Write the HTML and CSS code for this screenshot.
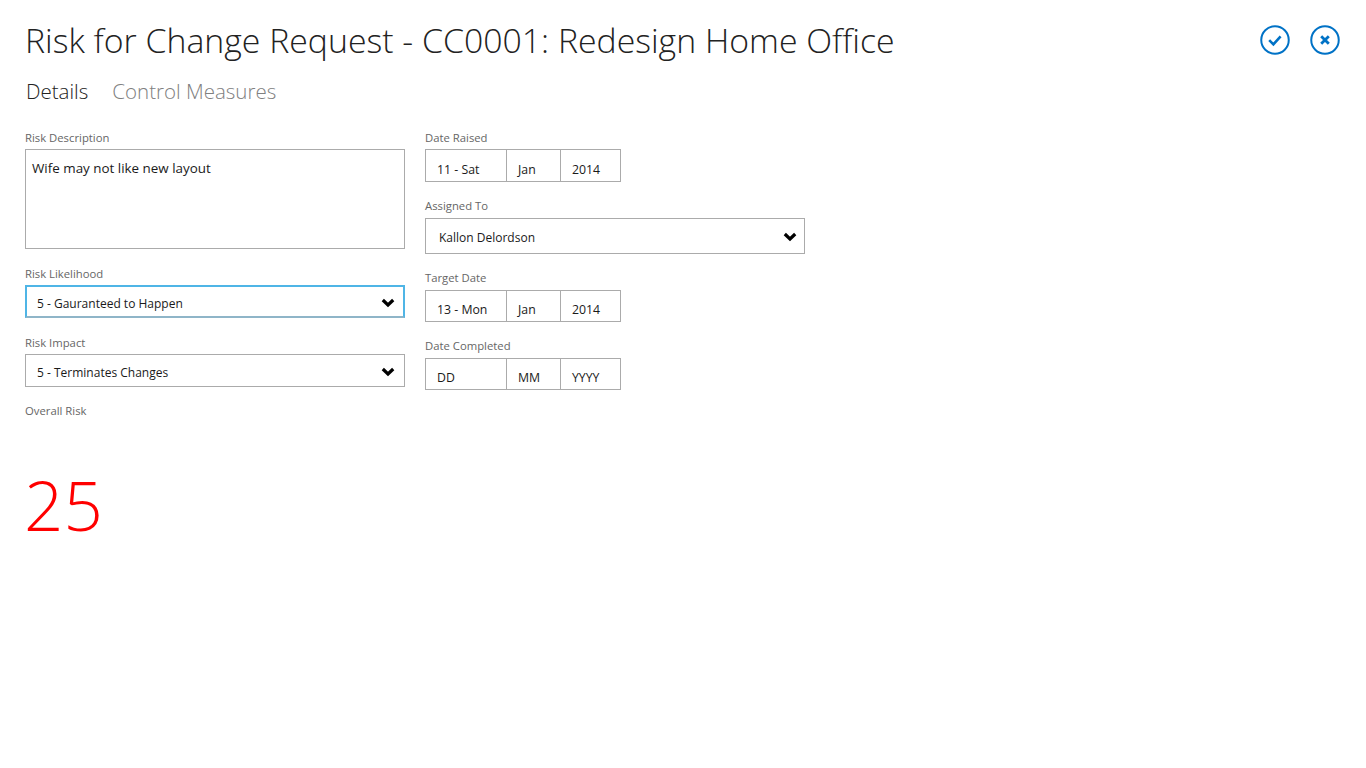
FILE: index.html
```html
<!DOCTYPE html>
<html lang="en">
<head>
    <meta charset="UTF-8">
    <title>Risk for Change Request</title>
    <link rel="stylesheet" href="styles.css">
</head>
<body>
    <div class="page-header">
        <h1>Risk for Change Request - CC0001: Redesign Home Office</h1>
        <div class="header-actions">
            <button class="round-btn" type="button" aria-label="Save">
                <svg width="30" height="30" viewBox="0 0 30 30"><circle cx="15" cy="15" r="13.75" fill="none" stroke="#0072c6" stroke-width="2"/><path d="M9.2 15.2l4.2 4.2 7.2-8" fill="none" stroke="#0072c6" stroke-width="2.6"/></svg>
            </button>
            <button class="round-btn" type="button" aria-label="Cancel">
                <svg width="30" height="30" viewBox="0 0 30 30"><circle cx="15" cy="15" r="13.75" fill="none" stroke="#0072c6" stroke-width="2"/><path d="M11.2 11.2l7.6 7.6M18.8 11.2l-7.6 7.6" fill="none" stroke="#0072c6" stroke-width="2.8"/></svg>
            </button>
        </div>
    </div>

    <div class="tabs">
        <span class="tab tab-active">Details</span>
        <span class="tab">Control Measures</span>
    </div>

    <div class="form-columns">
        <div class="form-col form-col-left">
            <label class="field-label">Risk Description</label>
            <div class="text-area">Wife may not like new layout</div>

            <label class="field-label label-likelihood">Risk Likelihood</label>
            <div class="select-box select-focus">
                <span>5 - Gauranteed to Happen</span>
                <svg class="chevron" width="14" height="10" viewBox="0 0 14 10"><path d="M1.8 2l5.2 5 5.2-5" fill="none" stroke="#000" stroke-width="3.2"/></svg>
            </div>

            <label class="field-label label-impact">Risk Impact</label>
            <div class="select-box select-impact">
                <span>5 - Terminates Changes</span>
                <svg class="chevron" width="14" height="10" viewBox="0 0 14 10"><path d="M1.8 2l5.2 5 5.2-5" fill="none" stroke="#000" stroke-width="3.2"/></svg>
            </div>

            <label class="field-label label-overall">Overall Risk</label>
            <div class="overall-value">25</div>
        </div>

        <div class="form-col form-col-right">
            <label class="field-label">Date Raised</label>
            <div class="date-box">
                <span class="date-day">11 - Sat</span>
                <span class="date-month">Jan</span>
                <span class="date-year">2014</span>
            </div>

            <label class="field-label label-assigned">Assigned To</label>
            <div class="select-box select-assigned">
                <span>Kallon Delordson</span>
                <svg class="chevron" width="14" height="10" viewBox="0 0 14 10"><path d="M1.8 2l5.2 5 5.2-5" fill="none" stroke="#000" stroke-width="3.2"/></svg>
            </div>

            <label class="field-label label-target">Target Date</label>
            <div class="date-box date-short">
                <span class="date-day">13 - Mon</span>
                <span class="date-month">Jan</span>
                <span class="date-year">2014</span>
            </div>

            <label class="field-label label-completed">Date Completed</label>
            <div class="date-box date-short">
                <span class="date-day">DD</span>
                <span class="date-month">MM</span>
                <span class="date-year">YYYY</span>
            </div>
        </div>
    </div>
</body>
</html>
```

FILE: styles.css
```css
body {
    margin: 0;
    padding: 0;
    background-color: #ffffff;
    color: #1a1a1a;
    font-family: "Open Sans", "Noto Sans", sans-serif;
    height: 768px;
    overflow: hidden;
}
.page-header {
    display: flex;
    justify-content: space-between;
    padding: 15px 26px 0 25px;
    height: 56px;
}
.page-header h1 {
    margin: 0;
    font-size: 33.8px;
    font-weight: 300;
    line-height: 50px;
    color: #222222;
}
.header-actions {
    display: flex;
    gap: 20px;
    padding-top: 10px;
}
.round-btn {
    width: 30px;
    height: 30px;
    padding: 0;
    border: none;
    background: none;
}
.tabs {
    display: flex;
    gap: 24px;
    padding: 5px 25px 0 26px;
    height: 54px;
}
.tab {
    font-size: 20.5px;
    line-height: 30px;
    font-weight: 300;
    color: #808080;
}
.tab-active {
    color: #222222;
}
.form-columns {
    display: flex;
    gap: 20px;
    padding-left: 25px;
}
.form-col-left {
    width: 380px;
}
.form-col-right {
    width: 380px;
}
.field-label {
    display: block;
    font-size: 11.3px;
    line-height: 16px;
    height: 19px;
    color: #666666;
}
.text-area {
    box-sizing: border-box;
    height: 100px;
    border: 1px solid #ababab;
    padding: 8px 6px;
    font-size: 13.4px;
    line-height: 20px;
    color: #1a1a1a;
}
.select-box {
    box-sizing: border-box;
    display: flex;
    justify-content: space-between;
    align-items: center;
    border: 1px solid #ababab;
    height: 33px;
    padding: 2px 9px 0 11px;
    font-size: 12px;
    color: #1a1a1a;
}
.select-focus {
    border: 2px solid #4fb5e6;
    border-bottom-color: #8fb5c8;
    padding: 2px 8px 0 10px;
}
.select-focus span,
.select-impact span {
    padding-top: 2px;
}
.select-assigned {
    height: 36px;
    margin-top: 1px;
    padding-left: 13px;
    padding-right: 7px;
}
.label-likelihood {
    margin-top: 17px;
}
.label-impact {
    margin-top: 17px;
}
.label-overall {
    margin-top: 16px;
}
.overall-value {
    margin: 37px 0 0 -1px;
    font-size: 69px;
    line-height: 90px;
    font-weight: 300;
    color: #ff0000;
}
.label-assigned,
.label-target,
.label-completed {
    margin-top: 16px;
}
.date-box {
    box-sizing: border-box;
    display: flex;
    width: 196px;
    height: 33px;
    border: 1px solid #ababab;
    font-size: 12.3px;
    color: #1a1a1a;
}
.date-short {
    height: 32px;
    margin-top: 1px;
}
.date-box span {
    box-sizing: border-box;
    padding: 10px 0 0 11px;
    line-height: 20px;
}
.date-short span {
    padding-top: 9px;
}
.date-day {
    width: 81px;
    border-right: 1px solid #ababab;
}
.date-month {
    width: 54px;
    border-right: 1px solid #ababab;
}
.date-year {
    width: 59px;
}
```
